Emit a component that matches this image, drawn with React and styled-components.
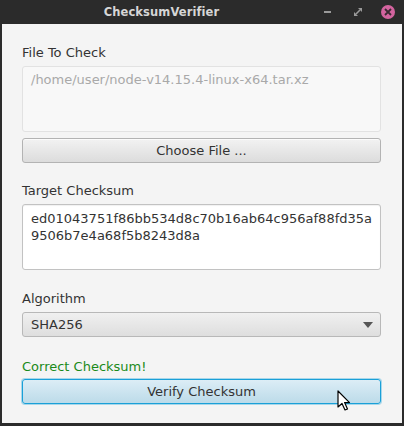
import React from "react";
import styled, { createGlobalStyle } from "styled-components";

const GlobalStyle = createGlobalStyle`
  html, body {
    margin: 0;
    padding: 0;
    background: #2b2b2b;
  }
  body {
    font-family: "DejaVu Sans", "Liberation Sans", sans-serif;
  }
`;

const Frame = styled.div`
  width: 404px;
  height: 426px;
  background: #2b2b2b;
  display: flex;
  flex-direction: column;
  box-sizing: border-box;
  padding: 0 2px 3px 2px;
  position: relative;
  overflow: hidden;
`;

const TitleBar = styled.div`
  height: 24px;
  display: flex;
  align-items: center;
  flex-shrink: 0;
`;

const Title = styled.div`
  flex: 1;
  text-align: center;
  color: #d6d6d6;
  font-weight: bold;
  font-size: 11.5px;
  letter-spacing: 0.1px;
`;

const WinButtons = styled.div`
  display: flex;
  align-items: center;
  gap: 16px;
  padding-right: 7px;
`;

const WinBtn = styled.div`
  width: 14px;
  height: 14px;
  display: flex;
  align-items: center;
  justify-content: center;
  border-radius: 50%;
  background: ${(p) => (p.close ? "#d3649f" : "transparent")};
`;

const Content = styled.div`
  flex: 1;
  background: #f4f4f4;
  display: flex;
  flex-direction: column;
  gap: 20px;
  padding: 21px 21px 0 20px;
`;

const Section = styled.div`
  display: flex;
  flex-direction: column;
  margin-top: ${(p) => p.offset || 0}px;
`;

const Label = styled.div`
  font-size: 13px;
  line-height: 16px;
  color: ${(p) => p.color || "#333"};
  margin-bottom: ${(p) => (p.tight ? 4 : 5)}px;
`;

const TextBox = styled.div`
  height: 66px;
  box-sizing: border-box;
  border: 1px solid ${(p) => (p.disabled ? "#e2e2e2" : "#c2c2c2")};
  border-radius: 3px;
  background: ${(p) => (p.disabled ? "#f8f8f8" : "#ffffff")};
  box-shadow: ${(p) => (p.disabled ? "none" : "inset 0 1px 1px rgba(0,0,0,0.06)")};
  color: ${(p) => (p.disabled ? "#a9a9a9" : "#333")};
  font-size: 13px;
  line-height: 17px;
  padding: ${(p) => (p.disabled ? 4 : 5)}px 8px 4px;
  white-space: pre;
`;

const Button = styled.div`
  height: 25px;
  box-sizing: border-box;
  margin-top: ${(p) => p.gapTop || 0}px;
  display: flex;
  align-items: center;
  justify-content: center;
  border-radius: 3px;
  font-size: 13px;
  color: #333;
  border: 1px solid ${(p) => (p.focused ? "#1aa0d8" : "#b3b3b3")};
  background: ${(p) =>
    p.focused
      ? "linear-gradient(#dcedf6, #bcdbe9)"
      : "linear-gradient(#f2f2f2, #dcdcdc)"};
  box-shadow: ${(p) =>
    p.focused ? "0 0 0 1px rgba(26,160,216,0.35)" : "inset 0 1px 0 #fbfbfb"};
`;

const Combo = styled.div`
  height: 25px;
  box-sizing: border-box;
  display: flex;
  align-items: center;
  justify-content: space-between;
  padding: 0 7px 0 8px;
  border-radius: 3px;
  border: 1px solid #b8b8b8;
  background: linear-gradient(#f0f0f0, #dedede);
  font-size: 13px;
  color: #333;
`;

const Cursor = styled.svg`
  position: absolute;
  left: 337px;
  top: 390px;
`;

export default function App() {
  return (
    <>
      <GlobalStyle />
      <Frame>
        <TitleBar>
          <Title>ChecksumVerifier</Title>
          <WinButtons>
            <WinBtn>
              <svg width="10" height="10" viewBox="0 0 10 10">
                <rect x="1" y="4" width="7" height="2" fill="#9a9a9a" />
              </svg>
            </WinBtn>
            <WinBtn>
              <svg width="10" height="10" viewBox="0 0 10 10">
                <path d="M5 1h4v4z M1 5v4h4z" fill="#9a9a9a" />
                <path d="M3 7L7 3" stroke="#9a9a9a" strokeWidth="1.6" />
              </svg>
            </WinBtn>
            <WinBtn close>
              <svg width="8" height="8" viewBox="0 0 8 8">
                <path d="M1 1L7 7M7 1L1 7" stroke="#3a2a32" strokeWidth="1.8" />
              </svg>
            </WinBtn>
          </WinButtons>
        </TitleBar>
        <Content>
          <Section>
            <Label>File To Check</Label>
            <TextBox disabled>/home/user/node-v14.15.4-linux-x64.tar.xz</TextBox>
            <Button gapTop={6}>Choose File ...</Button>
          </Section>
          <Section>
            <Label>Target Checksum</Label>
            <TextBox>
              {"ed01043751f86bb534d8c70b16ab64c956af88fd35a\n9506b7e4a68f5b8243d8a"}
            </TextBox>
          </Section>
          <Section offset={1}>
            <Label>Algorithm</Label>
            <Combo>
              <span>SHA256</span>
              <svg width="10" height="6" viewBox="0 0 10 6">
                <path d="M0 0h10L5 6z" fill="#555" />
              </svg>
            </Combo>
          </Section>
          <Section offset={2}>
            <Label color="#1a8a1a" tight>
              Correct Checksum!
            </Label>
            <Button focused>Verify Checksum</Button>
          </Section>
        </Content>
        <Cursor width="14" height="22" viewBox="0 0 14 22">
          <path
            d="M1 1 L1 17 L5 13.5 L8 20 L10.5 19 L7.6 12.6 L12.5 12.6 Z"
            fill="#fff"
            stroke="#000"
            strokeWidth="1.2"
            strokeLinejoin="round"
          />
        </Cursor>
      </Frame>
    </>
  );
}
